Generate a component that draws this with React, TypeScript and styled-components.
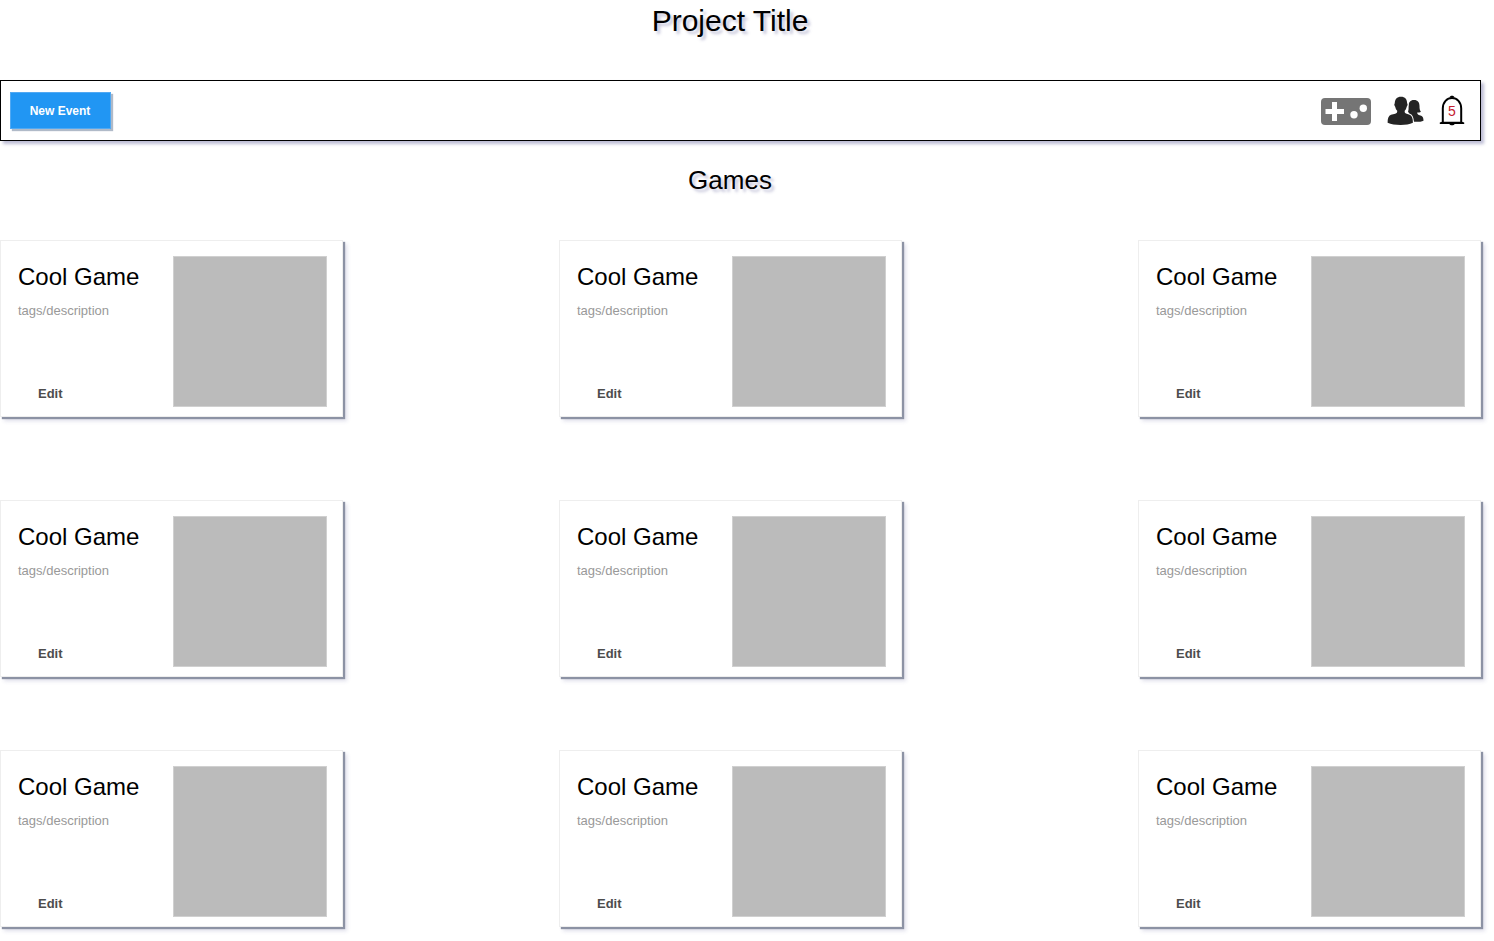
import React from "react";
import styled, { createGlobalStyle } from "styled-components";

const GlobalStyle = createGlobalStyle`
  * { box-sizing: border-box; }
  body {
    margin: 0;
    background: #fff;
    color: #000;
    font-family: "Liberation Sans", Arial, Helvetica, sans-serif;
  }
  h1, h2, h3, p { margin: 0; font-weight: 400; }
  button { font-family: inherit; cursor: pointer; }
`;

const Page = styled.div`
  padding: 0 12px 13px 0;
`;

const Heading = styled.h1<{ $size: number }>`
  padding-right: 22px;
  text-align: center;
  font-size: ${(p) => p.$size}px;
  line-height: 42px;
  text-shadow: 3px 3px 3px rgba(90, 90, 150, 0.35);
`;

const Toolbar = styled.nav`
  display: flex;
  align-items: center;
  justify-content: space-between;
  height: 61px;
  margin: 38px 1px 18px 0;
  padding: 0 15px 0 9px;
  border: 1px solid #000;
  background: #fff;
  box-shadow: 3px 3px 3px rgba(90, 90, 150, 0.4);
`;

const PrimaryButton = styled.button`
  width: 101px;
  height: 37px;
  padding: 0 1px 0 0;
  border: 1px solid #51a9f3;
  background: #2196f3;
  box-shadow: 2px 2px 1px #b0bac8;
  color: #fff;
  font-size: 12px;
  font-weight: 700;
`;

const Actions = styled.div`
  display: flex;
  align-items: center;
  gap: 15px;
`;

const IconButton = styled.button`
  display: flex;
  padding: 0;
  border: 0;
  background: none;
`;

const BellCount = styled.text`
  font-family: "Liberation Sans", Arial, sans-serif;
  font-size: 14px;
  fill: #c4202e;
  text-anchor: middle;
`;

const Grid = styled.main`
  display: grid;
  grid-template-columns: 559fr 579fr 344px;
  grid-template-rows: 260px 250px auto;
  align-items: start;
  margin-top: 39px;
`;

const Card = styled.article`
  display: flex;
  justify-content: space-between;
  width: 343px;
  height: 177px;
  padding: 15px 15px 9px 17px;
  border: 1px solid #eee;
  background: #fff;
  box-shadow: 2px 2px 1px #8c92a4, 4px 4px 4px rgba(90, 90, 150, 0.2);
`;

const CardBody = styled.div`
  display: flex;
  flex-direction: column;
  align-items: flex-start;
  padding-top: 6px;
`;

const CardTitle = styled.h3`
  font-size: 24px;
  line-height: 30px;
`;

const CardText = styled.p`
  margin-top: 11px;
  color: #999;
  font-size: 13px;
  line-height: 16px;
`;

const EditButton = styled.button`
  margin-top: auto;
  padding: 6px 20px 5px;
  border: 0;
  background: none;
  color: #4d4d4d;
  font-size: 13px;
  font-weight: 700;
  line-height: 16px;
`;

const Cover = styled.div`
  width: 154px;
  height: 151px;
  border: 1px solid #d0d0d0;
  background: #bbb;
`;

const GamepadIcon = () => (
  <svg width="51" height="28" viewBox="0 0 51 28" aria-hidden="true">
    <rect y="1" width="50" height="27" rx="4" fill="#757575" />
    <path d="M11 5h5v7h7v5h-7v7h-5v-7H4.500v-5H11z" fill="#fff" />
    <circle cx="33" cy="17.8" r="3.7" fill="#fff" />
    <circle cx="42.300" cy="11.200" r="3.7" fill="#fff" />
  </svg>
);

const PeopleIcon = () => (
  <svg width="37" height="30" viewBox="0 0 37 30" fill="#242424" aria-hidden="true">
    <path d="M27 4c3.900 0 5.500 2.500 5.500 6 0 2.400.2 4.300 1.400 5.700-1 .7-2.300.9-3.700.9 0 1.300.5 1.900 1.600 2.300l2.400.8c1.700.6 2.300 2.500 2.300 5-2.200 1-5.500 1.300-9.500 1.100L21 15.600c.7-1.300.6-3.300.6-5.600 0-3.500 1.500-6 5.400-6z" />
    <path
      d="M14 .8c4 0 6.300 2.700 6.100 6.500.8.500.6 2.600-.4 3.400-.4 1.900-1.100 3.200-2 4-.2 1.700.2 2.500 1.900 3l3 1c2.500.9 3.300 3.700 3.300 8-3.300 1.600-7.300 2.200-12.300 2.200S4 28.300.6 26.700c0-4.300.9-7.100 3.400-8l4.200-1c1.600-.5 2.200-1.300 2-3-.9-.8-1.600-2.100-2-4-1-.8-1.200-2.900-.4-3.400C7.700 3.500 10 .8 14 .8z"
      stroke="#fff"
      strokeWidth="2"
      paintOrder="stroke"
    />
  </svg>
);

const BellIcon = ({ count }: { count: number }) => (
  <svg width="26" height="32" viewBox="0 0 26 32" aria-hidden="true">
    <path
      d="M3.800 27V13.500C3.800 7 8 3 13 3s9.200 4 9.200 10.500V27"
      fill="none"
      stroke="#000"
      strokeWidth="2"
    />
    <path d="M10.500 2.500c.3-2.300 4.700-2.300 5 0zM.8 29v-1.500L3 26.800h20l2.200.7V29h-9.500c-.6 1.800-4.800 1.800-5.400 0z" />
    <BellCount x="13" y="21">{count}</BellCount>
  </svg>
);

const games = Array.from({ length: 9 }, (_, id) => ({
  id,
  title: "Cool Game",
  description: "tags/description",
}));

export default function App() {
  return (
    <Page>
      <GlobalStyle />
      <Heading $size={30}>Project Title</Heading>
      <Toolbar>
        <PrimaryButton type="button">New Event</PrimaryButton>
        <Actions>
          <IconButton type="button" aria-label="Games"><GamepadIcon /></IconButton>
          <IconButton type="button" aria-label="Friends"><PeopleIcon /></IconButton>
          <IconButton type="button" aria-label="Notifications"><BellIcon count={5} /></IconButton>
        </Actions>
      </Toolbar>
      <Heading as="h2" $size={26}>Games</Heading>
      <Grid>
        {games.map((game) => (
          <Card key={game.id}>
            <CardBody>
              <CardTitle>{game.title}</CardTitle>
              <CardText>{game.description}</CardText>
              <EditButton type="button">Edit</EditButton>
            </CardBody>
            <Cover />
          </Card>
        ))}
      </Grid>
    </Page>
  );
}
